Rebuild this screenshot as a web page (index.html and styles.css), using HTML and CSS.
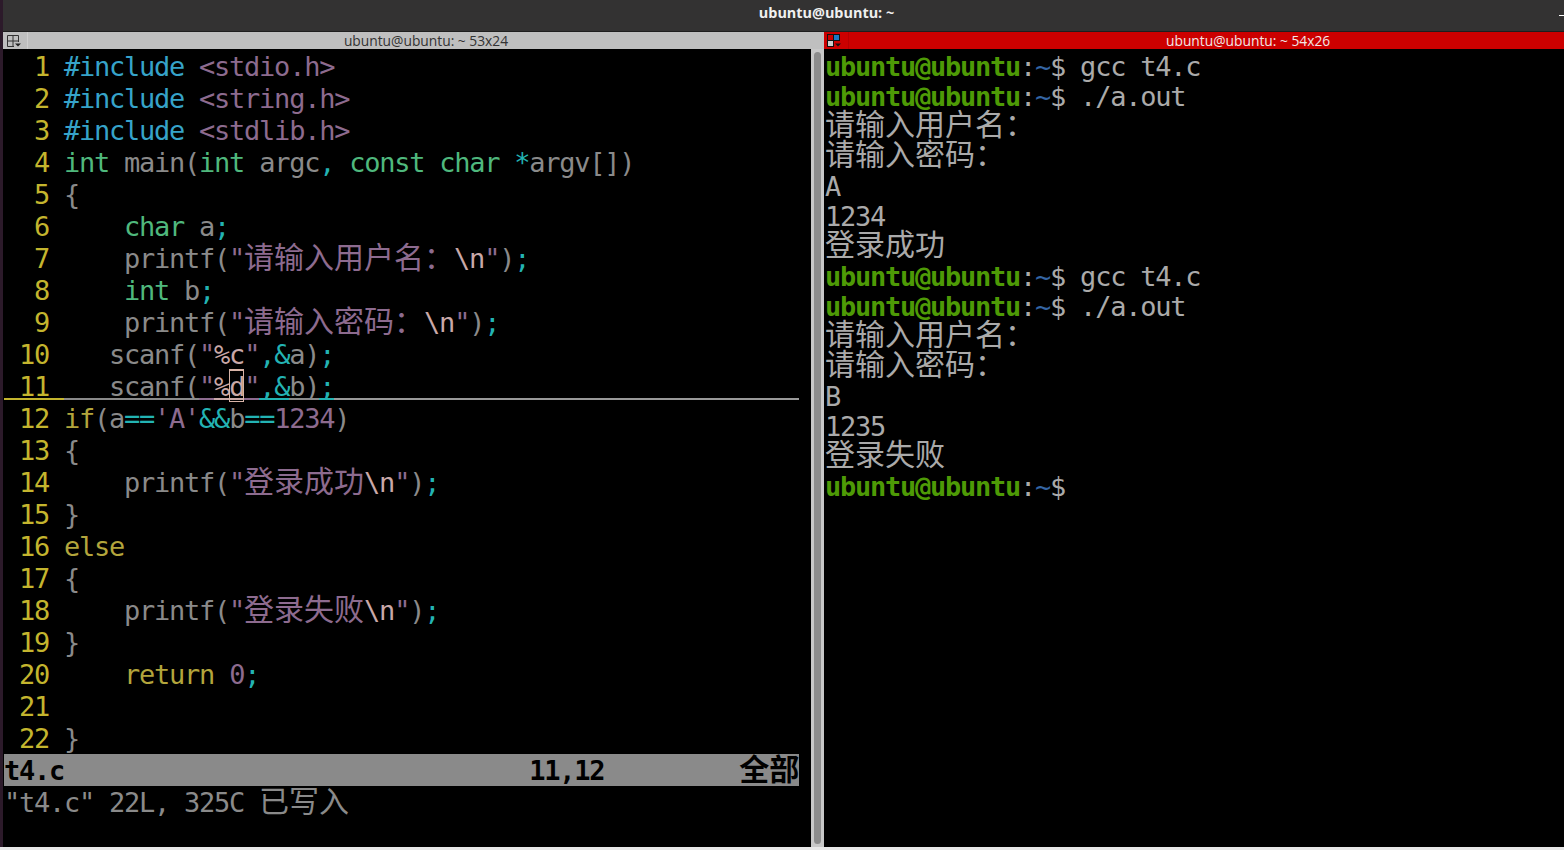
FILE: index.html
```html
<!DOCTYPE html>
<html lang="zh">
<head>
<meta charset="utf-8">
<title>ubuntu@ubuntu: ~</title>
<link rel="stylesheet" href="styles.css">
</head>
<body>
<div class="window">
  <header class="titlebar"><span class="title">ubuntu@ubuntu: ~</span><span class="minimize"></span></header>
  <main class="panes">
    <section class="pane left">
      <div class="panetitle">
        <div class="iconbox"><svg width="16" height="14" viewBox="0 0 16 14"><path d="M1.5 1.5h11v11h-11zM7 1.5v11M1.5 7h11" fill="none" stroke="#333" stroke-width="1"/><rect x="8" y="8" width="7" height="6" fill="#bfbfbf"/><path d="M9 9.5h6l-3 3z" fill="#222"/></svg></div>
        <div class="panelabel">ubuntu@ubuntu: ~ 53x24</div>
      </div>
      <div class="content">
        <div class="vim">
          <div class="editor">
            <div class="row"><span class="n">  1 </span><span class="p">#include</span> <span class="s">&lt;stdio.h&gt;</span></div>
            <div class="row"><span class="n">  2 </span><span class="p">#include</span> <span class="s">&lt;string.h&gt;</span></div>
            <div class="row"><span class="n">  3 </span><span class="p">#include</span> <span class="s">&lt;stdlib.h&gt;</span></div>
            <div class="row"><span class="n">  4 </span><span class="t">int</span> main(<span class="t">int</span> argc<span class="o">,</span> <span class="t">const</span> <span class="t">char</span> <span class="o">*</span>argv[])</div>
            <div class="row"><span class="n">  5 </span>{</div>
            <div class="row"><span class="n">  6 </span>    <span class="t">char</span> a<span class="o">;</span></div>
            <div class="row"><span class="n">  7 </span>    printf(<span class="s">"<span class="c">请输入用户名：</span></span><span class="e">\n</span><span class="s">"</span>)<span class="o">;</span></div>
            <div class="row"><span class="n">  8 </span>    <span class="t">int</span> b<span class="o">;</span></div>
            <div class="row"><span class="n">  9 </span>    printf(<span class="s">"<span class="c">请输入密码：</span></span><span class="e">\n</span><span class="s">"</span>)<span class="o">;</span></div>
            <div class="row"><span class="n"> 10 </span>   scanf(<span class="s">"</span><span class="e">%c</span><span class="s">"</span><span class="o">,&amp;</span>a)<span class="o">;</span></div>
            <div class="row cursorline"><span class="n"> 11 </span><span>   scanf(</span><span class="s">"</span><span class="e">%</span><span class="e cursor">d</span><span class="s">"</span><span class="o">,&amp;</span><span>b)</span><span class="o">;</span></div>
            <div class="row"><span class="n"> 12 </span><span class="k">if</span>(a<span class="o">==</span><span class="s">'A'</span><span class="o">&amp;&amp;</span>b<span class="o">==</span><span class="s">1234</span>)</div>
            <div class="row"><span class="n"> 13 </span>{</div>
            <div class="row"><span class="n"> 14 </span>    printf(<span class="s">"<span class="c">登录成功</span></span><span class="e">\n</span><span class="s">"</span>)<span class="o">;</span></div>
            <div class="row"><span class="n"> 15 </span>}</div>
            <div class="row"><span class="n"> 16 </span><span class="k">else</span></div>
            <div class="row"><span class="n"> 17 </span>{</div>
            <div class="row"><span class="n"> 18 </span>    printf(<span class="s">"<span class="c">登录失败</span></span><span class="e">\n</span><span class="s">"</span>)<span class="o">;</span></div>
            <div class="row"><span class="n"> 19 </span>}</div>
            <div class="row"><span class="n"> 20 </span>    <span class="k">return</span> <span class="s">0</span><span class="o">;</span></div>
            <div class="row"><span class="n"> 21 </span></div>
            <div class="row"><span class="n"> 22 </span>}</div>
          </div>
          <div class="row status">t4.c                               11,12         <span class="c">全部</span></div>
          <div class="row message">"t4.c" 22L, 325C <span class="c">已写入</span></div>
        </div>
        <div class="scrollbar"><div class="thumb"></div></div>
      </div>
    </section>
    <section class="pane right">
      <div class="panetitle active">
        <div class="iconbox"><svg width="16" height="14" viewBox="0 0 16 14"><rect x="0.5" y="0.5" width="6" height="6" fill="#c00" stroke="#111"/><rect x="6.5" y="0.5" width="6" height="6" fill="#1a78c2" stroke="#111"/><rect x="0.5" y="6.5" width="6" height="6" fill="#ccc" stroke="#111"/><path d="M8 9.5h6l-3 3z" fill="#111"/></svg></div>
        <div class="panelabel">ubuntu@ubuntu: ~ 54x26</div>
      </div>
      <div class="shell">
        <div class="line"><span class="u">ubuntu@ubuntu</span>:<span class="h">~</span>$ gcc t4.c</div>
        <div class="line"><span class="u">ubuntu@ubuntu</span>:<span class="h">~</span>$ ./a.out</div>
        <div class="line"><span class="c">请输入用户名：</span></div>
        <div class="line"><span class="c">请输入密码：</span></div>
        <div class="line">A</div>
        <div class="line">1234</div>
        <div class="line"><span class="c">登录成功</span></div>
        <div class="line"><span class="u">ubuntu@ubuntu</span>:<span class="h">~</span>$ gcc t4.c</div>
        <div class="line"><span class="u">ubuntu@ubuntu</span>:<span class="h">~</span>$ ./a.out</div>
        <div class="line"><span class="c">请输入用户名：</span></div>
        <div class="line"><span class="c">请输入密码：</span></div>
        <div class="line">B</div>
        <div class="line">1235</div>
        <div class="line"><span class="c">登录失败</span></div>
        <div class="line"><span class="u">ubuntu@ubuntu</span>:<span class="h">~</span>$</div>
      </div>
    </section>
  </main>
</div>
</body>
</html>
```
FILE: styles.css
```css
* { box-sizing: border-box; }
html, body { margin: 0; height: 100%; overflow: hidden; background: #e8e8e8; }
.window { display: flex; flex-direction: column; height: 847px; border-left: 3px solid #2c1a2a; }
.titlebar { flex: 0 0 32px; background: #333232; border-bottom: 1px solid #1e1e1e; display: flex; align-items: center; justify-content: center; position: relative; padding: 0 0 6px 0; }
.title { font: bold 14.4px/20px "Open Sans", "Noto Sans", sans-serif; color: #f0f0f0; margin-left: 86px; }
.minimize { position: absolute; right: 0; top: 15px; width: 5px; height: 1px; background: #fff; }
.panes { flex: 1; display: flex; min-height: 0; }
.pane { display: flex; flex-direction: column; min-width: 0; background: #000; }
.left { flex: 0 0 821px; }
.right { flex: 1; }
.panetitle { flex: 0 0 17px; min-height: 0; display: flex; align-items: center; background: #bfbfbf; color: #333; font: 13.8px/17px "Open Sans", "Noto Sans", sans-serif; }
.panetitle.active { background: #cc0000; color: #f2e6e6; }
.iconbox { flex: 0 0 25px; height: 100%; display: flex; align-items: center; padding-left: 3px; border-right: 1px solid #cfcfcf; }
.active .iconbox { border-right: 1px solid #b80000; }
.panelabel { flex: 1; text-align: center; white-space: nowrap; }
.active .panelabel { padding-left: 317px; text-align: left; }
.content { flex: 1; display: flex; min-height: 0; }
.vim { flex: 0 0 808px; padding: 1px 0 0 1px; font: 27px/34px "DejaVu Sans Mono", monospace; letter-spacing: -1.25px; color: #8a8a8a; }
.row { height: 32px; white-space: pre; }
.c { font-family: "Noto Sans CJK SC", sans-serif; font-size: 30px; letter-spacing: 0; line-height: 0; }
.n { color: #c4b52e; }
.p { color: #36a3c9; }
.s { color: #8d6b8f; }
.t { color: #4fb87d; }
.k { color: #b3a53c; }
.o { color: #23b3b3; }
.e { color: #c9a8a8; }
.cursorline { background: linear-gradient(#9a9a9a, #9a9a9a) 0 28px / 795px 2px no-repeat; }
.cursorline span { display: inline-block; height: 32px; background: linear-gradient(currentColor, currentColor) 0 28px / 100% 2px no-repeat; }
.cursorline .cursor { box-shadow: inset 0 0 0 1px #d8b4a8, 0 -1px 0 0 #d8b4a8; }
.status { width: 795px; background: #8a8a8a; color: #000; font-weight: bold; }
.message { color: #8a8a8a; }
.scrollbar { flex: 0 0 13px; background: #c8c8c8; padding: 3px; }
.thumb { width: 7px; height: 100%; border-radius: 4px; background: #8c8c8c; }
.shell { flex: 1; padding: 1px 0 0 1px; font: 27px/34px "DejaVu Sans Mono", monospace; letter-spacing: -1.25px; color: #aaaaaa; }
.line { height: 30px; white-space: pre; }
.line .c { vertical-align: 1px; }
.u { color: #4e9a06; font-weight: bold; }
.h { color: #3465a4; }
```
